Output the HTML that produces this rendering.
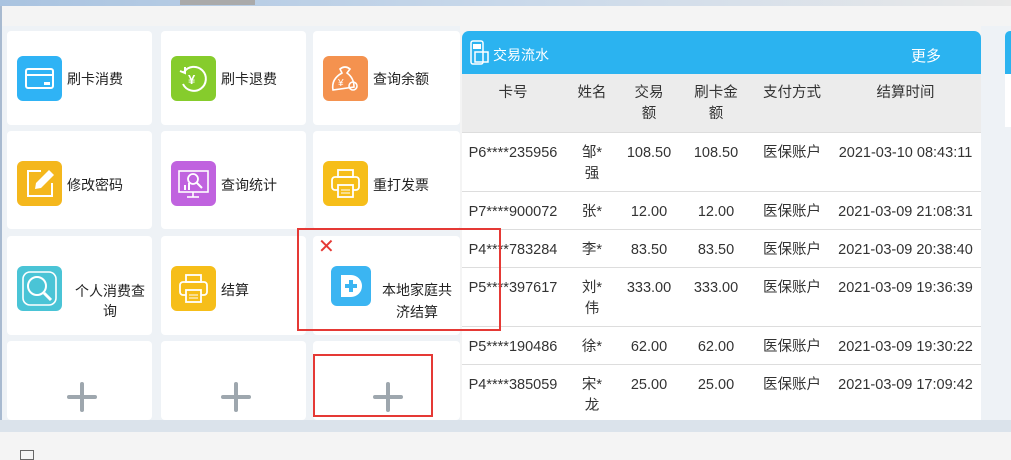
<!DOCTYPE html>
<html><head><meta charset="utf-8"><style>
*{margin:0;padding:0;box-sizing:border-box}
body{width:1011px;height:454px;overflow:hidden;background:#f4f4f4;font-family:"Liberation Sans","Noto Sans CJK SC",sans-serif;position:relative;color:#333}
.abs{position:absolute}
.card{position:absolute;background:#fff;border-radius:4px}
.ic{position:absolute;width:45px;height:45px;border-radius:6px}
.lb{position:absolute;font-size:14px;color:#222;line-height:20px}
.plus{position:absolute;width:30px;height:30px}
.plus:before{content:"";position:absolute;left:0;top:13px;width:30px;height:4px;background:#9ea7ae;border-radius:2px}
.plus:after{content:"";position:absolute;top:0;left:13px;height:30px;width:4px;background:#9ea7ae;border-radius:2px}
table{border-collapse:collapse;position:absolute;left:462px;top:74px;width:519px;font-size:14.5px;color:#333;table-layout:fixed}
td,th{text-align:center;font-weight:normal;line-height:21px;vertical-align:top;white-space:nowrap}
th{background:#ececec;padding-top:9px;height:58px}
tr.r td{border-top:1px solid #ddd;background:#fff;padding-top:10px}
</style></head><body>
<div class="abs" style="left:0;top:0;width:1011px;height:6px;background:linear-gradient(90deg,#a9c3e0,#c8d8ea 50%,#e9e9e9)"></div>
<div class="abs" style="left:180px;top:0;width:75px;height:5px;background:#aaa"></div>
<div class="abs" style="left:0;top:6px;width:2px;height:414px;background:#a8bad0"></div>
<div class="abs" style="left:2px;top:26px;width:458px;height:394px;background:#eef2f6"></div>

<div class="card" style="left:7px;top:31px;width:145px;height:94px"></div>
<div class="card" style="left:161px;top:31px;width:145px;height:94px"></div>
<div class="card" style="left:313px;top:31px;width:147px;height:94px"></div>
<div class="card" style="left:7px;top:131px;width:145px;height:98px"></div>
<div class="card" style="left:161px;top:131px;width:145px;height:98px"></div>
<div class="card" style="left:313px;top:131px;width:147px;height:98px"></div>
<div class="card" style="left:7px;top:236px;width:145px;height:99px"></div>
<div class="card" style="left:161px;top:236px;width:145px;height:99px"></div>
<div class="card" style="left:313px;top:236px;width:147px;height:99px"></div>
<div class="card" style="left:7px;top:341px;width:145px;height:79px"></div>
<div class="card" style="left:161px;top:341px;width:145px;height:79px"></div>
<div class="card" style="left:313px;top:341px;width:147px;height:79px"></div>

<div class="ic" style="left:17px;top:56px;background:#2fb3f5"><svg width="45" height="45"><rect x="9" y="13" width="27" height="19" rx="2" fill="none" stroke="#fff" stroke-width="2"/><line x1="9" y1="19" x2="36" y2="19" stroke="#fff" stroke-width="2"/><rect x="27" y="26" width="6" height="3" fill="#fff"/></svg></div>
<div class="lb" style="left:67px;top:69px">刷卡消费</div>
<div class="ic" style="left:171px;top:56px;background:#86cc2c"><svg width="45" height="45"><path d="M13 16 A12 12 0 1 1 12 28" fill="none" stroke="#fff" stroke-width="2"/><path d="M9 15 L14 17 L14 11" fill="none" stroke="#fff" stroke-width="2"/><text x="17" y="28" font-size="13" fill="#fff" font-weight="bold">¥</text></svg></div>
<div class="lb" style="left:221px;top:69px">刷卡退费</div>
<div class="ic" style="left:323px;top:56px;background:#f4924f"><svg width="45" height="45"><path d="M17 13 Q22 9 27 13 L24 17 Q31 22 31 31 L10 34 Q8 23 19 17 Z" fill="none" stroke="#fff" stroke-width="1.6"/><text x="15" y="30" font-size="10" fill="#fff">¥</text><circle cx="30" cy="30" r="4" fill="none" stroke="#fff" stroke-width="1.6"/></svg></div>
<div class="lb" style="left:373px;top:69px">查询余额</div>

<div class="ic" style="left:17px;top:161px;background:#f4b71d"><svg width="45" height="45"><path d="M24 10 H11 V35 H35 V22" fill="none" stroke="#fff" stroke-width="2"/><path d="M32 9 L37 14 L24 27 L18 28 L19 22 Z" fill="#fff"/></svg></div>
<div class="lb" style="left:67px;top:175px">修改密码</div>
<div class="ic" style="left:171px;top:161px;background:#c063df"><svg width="45" height="45"><rect x="8" y="10" width="29" height="21" fill="none" stroke="#fff" stroke-width="1.6"/><circle cx="22" cy="18" r="5" fill="none" stroke="#fff" stroke-width="1.8"/><line x1="26" y1="22" x2="31" y2="27" stroke="#fff" stroke-width="2"/><rect x="13" y="24" width="2" height="5" fill="#fff"/><rect x="17" y="22" width="2" height="7" fill="#fff"/><line x1="22" y1="31" x2="22" y2="36" stroke="#fff" stroke-width="1.6"/><line x1="16" y1="36" x2="28" y2="36" stroke="#fff" stroke-width="1.6"/></svg></div>
<div class="lb" style="left:221px;top:175px">查询统计</div>
<div class="ic" style="left:323px;top:161px;background:#f6be19"><svg width="45" height="45"><rect x="15" y="9" width="15" height="7" fill="none" stroke="#fff" stroke-width="1.8"/><rect x="9" y="16" width="27" height="13" rx="3" fill="none" stroke="#fff" stroke-width="1.8"/><rect x="15" y="24" width="15" height="12" fill="#f6be19" stroke="#fff" stroke-width="1.8"/><line x1="18" y1="29" x2="27" y2="29" stroke="#fff"/><line x1="18" y1="32" x2="27" y2="32" stroke="#fff"/></svg></div>
<div class="lb" style="left:373px;top:175px">重打发票</div>

<div class="ic" style="left:17px;top:266px;background:#4ac4d6"><svg width="45" height="45"><rect x="6" y="6" width="33" height="33" rx="7" fill="none" stroke="#fff" stroke-width="1.6"/><circle cx="20" cy="20" r="9" fill="none" stroke="#fff" stroke-width="2"/><line x1="27" y1="27" x2="34" y2="34" stroke="#fff" stroke-width="3"/></svg></div>
<div class="lb" style="left:70px;top:281px;width:80px;text-align:center">个人消费查<br>询</div>
<div class="ic" style="left:171px;top:266px;background:#f6be19"><svg width="45" height="45"><rect x="15" y="9" width="15" height="7" fill="none" stroke="#fff" stroke-width="1.8"/><rect x="9" y="16" width="27" height="13" rx="3" fill="none" stroke="#fff" stroke-width="1.8"/><rect x="15" y="24" width="15" height="12" fill="#f6be19" stroke="#fff" stroke-width="1.8"/><line x1="18" y1="29" x2="27" y2="29" stroke="#fff"/><line x1="18" y1="32" x2="27" y2="32" stroke="#fff"/></svg></div>
<div class="lb" style="left:221px;top:280px">结算</div>
<div class="ic" style="left:331px;top:266px;width:40px;height:40px;background:#3bb5f2"><svg width="40" height="40"><path d="M10 9 H20 A11 11 0 0 1 20 31 H10 Z" fill="#fff"/><rect x="14" y="18" width="12" height="4" fill="#3bb5f2"/><rect x="18" y="14" width="4" height="12" fill="#3bb5f2"/></svg></div>
<div class="lb" style="left:373px;top:279px;width:88px;text-align:center;line-height:22px">本地家庭共<br>济结算</div>
<div class="abs" style="left:318px;top:236px;color:#e53935;font-size:20px;line-height:22px">✕</div>
<div class="plus" style="left:67px;top:382px"></div>
<div class="plus" style="left:221px;top:382px"></div>
<div class="plus" style="left:373px;top:382px"></div>
<div class="abs" style="left:313px;top:354px;width:120px;height:63px;border:2px solid #e53935"></div>

<div class="abs" style="left:0;top:420px;width:1011px;height:12px;background:#dbe3eb"></div>
<div class="abs" style="left:20px;top:450px;width:14px;height:10px;border:1px solid #666"></div>

<div class="abs" style="left:981px;top:26px;width:30px;height:394px;background:#eef2f6"></div>
<div class="abs" style="left:462px;top:31px;width:519px;height:43px;background:#2bb3f0;border-radius:7px 7px 0 0"></div>
<div class="abs" style="left:1005px;top:31px;width:6px;height:43px;background:#2bb3f0;border-radius:5px 0 0 0"></div>
<div class="abs" style="left:1005px;top:74px;width:6px;height:53px;background:#fff"></div>
<svg class="abs" style="left:470px;top:40px" width="20" height="26"><rect x="1" y="1" width="12" height="23" rx="2" fill="none" stroke="#fff" stroke-width="1.5"/><rect x="3" y="4" width="8" height="5" fill="#fff"/><rect x="5" y="12" width="13" height="10" fill="none" stroke="#fff" stroke-width="1.5"/></svg>
<div class="abs" style="left:493px;top:45px;color:#fff;font-size:14px">交易流水</div>
<div class="abs" style="left:911px;top:45px;color:#fff;font-size:15px">更多</div>
<table>
<colgroup><col style="width:102px"><col style="width:56px"><col style="width:58px"><col style="width:76px"><col style="width:76px"><col></colgroup>
<tr><th>卡号</th><th>姓名</th><th>交易<br>额</th><th>刷卡金<br>额</th><th>支付方式</th><th>结算时间</th></tr>
<tr class="r" style="height:59px"><td>P6****235956</td><td>邹*<br>强</td><td>108.50</td><td>108.50</td><td>医保账户</td><td>2021-03-10 08:43:11</td></tr>
<tr class="r" style="height:38px"><td>P7****900072</td><td>张*</td><td>12.00</td><td>12.00</td><td>医保账户</td><td>2021-03-09 21:08:31</td></tr>
<tr class="r" style="height:38px"><td>P4****783284</td><td>李*</td><td>83.50</td><td>83.50</td><td>医保账户</td><td>2021-03-09 20:38:40</td></tr>
<tr class="r" style="height:59px"><td>P5****397617</td><td>刘*<br>伟</td><td>333.00</td><td>333.00</td><td>医保账户</td><td>2021-03-09 19:36:39</td></tr>
<tr class="r" style="height:38px"><td>P5****190486</td><td>徐*</td><td>62.00</td><td>62.00</td><td>医保账户</td><td>2021-03-09 19:30:22</td></tr>
<tr class="r" style="height:56px"><td>P4****385059</td><td>宋*<br>龙</td><td>25.00</td><td>25.00</td><td>医保账户</td><td>2021-03-09 17:09:42</td></tr>
</table>
<div class="abs" style="left:297px;top:228px;width:204px;height:103px;border:2px solid #e53935;z-index:5"></div>
</body></html>
